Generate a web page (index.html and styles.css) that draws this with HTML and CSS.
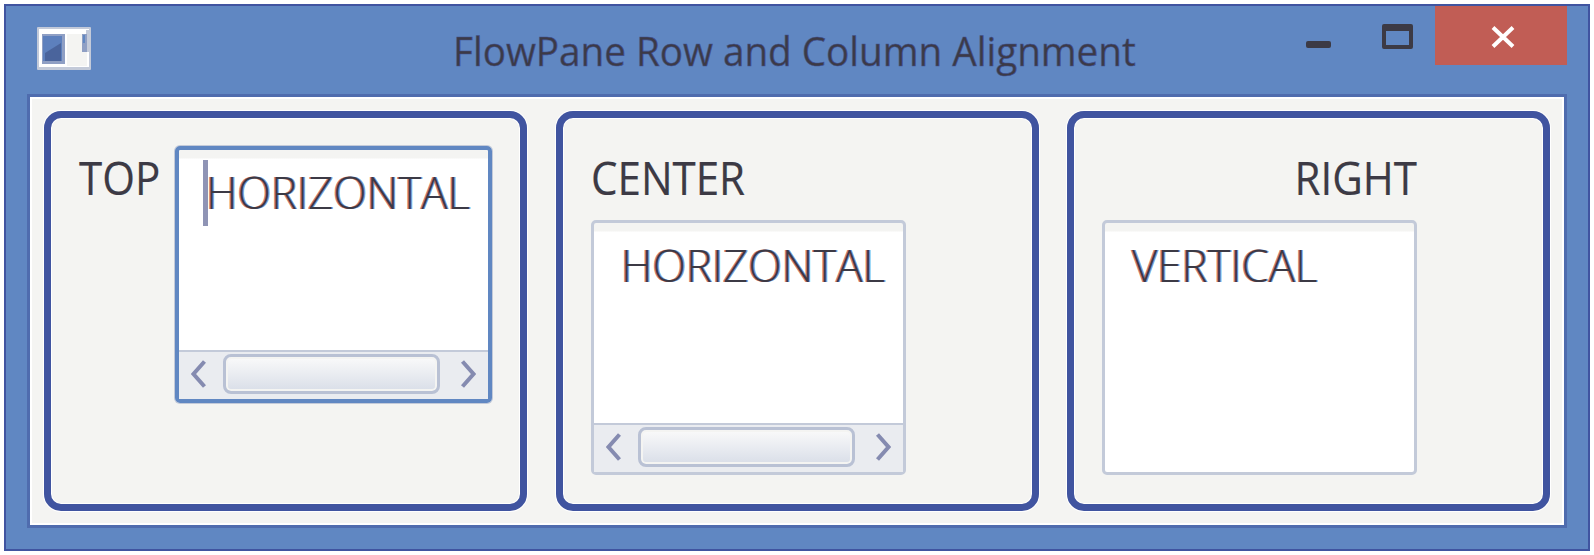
FILE: index.html
```html
<!DOCTYPE html>
<html lang="en">
<head>
<meta charset="utf-8">
<title>FlowPane Row and Column Alignment</title>
<link rel="stylesheet" href="styles.css">
</head>
<body>
<div class="window">
  <header class="titlebar">
    <svg class="app-icon" width="54" height="43" viewBox="0 0 54 43">
      <rect width="54" height="43" rx="1" fill="#c3cad9"/>
      <rect x="2" y="2" width="50" height="38" fill="#fff"/>
      <rect x="30" y="7" width="20" height="32" fill="#f4f4f2"/>
      <rect x="5" y="7" width="23" height="30" fill="#8f9fc4"/>
      <rect x="6" y="9" width="19" height="25" fill="#5d80bd"/>
      <path d="M8 34V26L24 16V34Z" fill="#4a649c"/>
      <path d="M49 3H53V25H49Z" fill="#c3cad9"/>
      <rect x="45" y="7" width="5" height="18" fill="#8f9fc4"/>
      <rect x="46" y="8" width="2" height="8" fill="#6087c2"/>
    </svg>
    <h1 class="title"><span class="fit fit-title">FlowPane Row and Column Alignment</span></h1>
    <div class="controls">
      <span class="minimize"></span>
      <span class="maximize"></span>
      <span class="close">
        <svg width="26" height="24" viewBox="0 0 26 24"><path d="M3 2.500L23 21.500M23 2.500L3 21.500" stroke="#fff" stroke-width="4"/></svg>
      </span>
    </div>
  </header>
  <main class="content">
    <section class="pane pane-row">
      <div class="label"><span class="fit fit-label">TOP</span></div>
      <div class="area focused">
        <div class="text"><i class="caret"></i><span class="fit fit-text">HORIZONTAL</span></div>
        <div class="scrollbar">
          <svg width="16" height="30" viewBox="0 0 16 30"><path d="M13.500 2.500L2.500 15L13.500 27.500"/></svg>
          <span class="thumb"></span>
          <svg width="16" height="30" viewBox="0 0 16 30"><path d="M2.500 2.500L13.500 15L2.500 27.500"/></svg>
        </div>
      </div>
    </section>
    <section class="pane">
      <div class="label"><span class="fit fit-label">CENTER</span></div>
      <div class="area">
        <div class="text"><span class="fit fit-text">HORIZONTAL</span></div>
        <div class="scrollbar">
          <svg width="16" height="30" viewBox="0 0 16 30"><path d="M13.500 2.500L2.500 15L13.500 27.500"/></svg>
          <span class="thumb"></span>
          <svg width="16" height="30" viewBox="0 0 16 30"><path d="M2.500 2.500L13.500 15L2.500 27.500"/></svg>
        </div>
      </div>
    </section>
    <section class="pane">
      <div class="label label-right"><span class="fit fit-label">RIGHT</span></div>
      <div class="area">
        <div class="text"><span class="fit fit-text">VERTICAL</span></div>
      </div>
    </section>
  </main>
</div>
</body>
</html>
```

FILE: styles.css
```css
* { box-sizing: border-box; }
body {
  margin: 0;
  padding: 4px;
  background: #fff;
  color: #3c3a45;
  font-family: "Open Sans", "Noto Sans", sans-serif;
}
.window {
  width: 1586px;
  height: 547px;
  display: flex;
  flex-direction: column;
  background: #6087c2;
  border: 2px solid #4054a0;
  padding: 0 21px 21px;
}
.titlebar {
  height: 88px;
  flex: none;
  display: flex;
  align-items: flex-start;
}
.app-icon { margin: 21px 0 0 10px; }
.title {
  margin: 14px 0 0 362px;
  width: 700px;
  font-size: 41px;
  line-height: 60px;
  font-weight: 400;
  -webkit-text-stroke: .6px #40508f;
}
.fit {
  display: inline-block;
  white-space: nowrap;
  transform-origin: 0 50%;
}
.fit-title { transform: scaleX(.942); }
.fit-label { transform: scaleX(.935); }
.fit-text { transform: scaleX(.973); }
.label-right .fit { transform-origin: 100% 50%; }
.controls {
  display: flex;
  align-items: flex-start;
  margin-left: auto;
}
.minimize {
  width: 25px;
  height: 7px;
  margin: 35px 51px 0 0;
  border-radius: 2px;
  background: #3c3a45;
}
.maximize {
  width: 31px;
  height: 25px;
  margin: 18px 22px 0 0;
  border: 4px solid #3c3a45;
  border-top-width: 7px;
  border-radius: 2px;
}
.close {
  width: 132px;
  height: 59px;
  display: flex;
  align-items: center;
  justify-content: center;
  padding: 3px 0 0 4px;
  background: #c15d55;
}
.content {
  flex: 1;
  display: flex;
  gap: 28.500px;
  padding: 14px;
  background: #f4f4f2;
  border: 3px solid #4f6cae;
  box-shadow: inset 0 0 0 2px #fff;
}
.pane {
  width: 483px;
  height: 400px;
  flex: none;
  padding: 28px 29px 0 28px;
  border: 7px solid #4054a0;
  border-radius: 17px;
  box-shadow: 0 0 0 1px #fff, inset 0 0 0 1px #fff;
}
.pane-row { display: flex; padding-right: 20px; }
.label {
  width: 315px;
  height: 74px;
  padding-top: 2px;
  font-size: 45px;
  line-height: 60px;
  -webkit-text-stroke: .2px #3c3a45;
}
.label-right { text-align: right; }
.pane-row .label { width: 96px; flex: none; }
.area {
  width: 315px;
  height: 255px;
  display: flex;
  flex-direction: column;
  border: 3px solid #c3cad9;
  border-radius: 5px;
  background: linear-gradient(#f4f4f2 8px, #fff 9px);
}
.area.focused {
  width: 317px;
  height: 257px;
  border: 4px solid #6087c2;
  box-shadow: 0 0 0 1px #c3cad9;
}
.text {
  flex: 1;
  position: relative;
  padding: 12px 0 0 27px;
  font-size: 45px;
  line-height: 60px;
  font-weight: 300;
  text-shadow: -1.200px 0 #c15d55cc, 1.200px 0 #6087c2cc;
}
.caret {
  position: absolute;
  left: 24px;
  top: 10px;
  width: 5px;
  height: 66px;
  background: #8f94b5;
}
.scrollbar {
  height: 49px;
  display: flex;
  align-items: center;
  justify-content: space-between;
  padding: 0 12px 4px 12px;
  border-top: 2px solid #c3cad9;
  background: #eaecf0;
}
.scrollbar svg {
  fill: none;
  stroke: #858bb0;
  stroke-width: 4;
}
.thumb {
  width: 217px;
  height: 40px;
  margin-right: 4px;
  border: 3px solid #b9c1d4;
  border-radius: 8px;
  background: linear-gradient(#fafafa, #d9dee8);
  box-shadow: inset 0 0 0 2px #f4f4f2;
}
```
